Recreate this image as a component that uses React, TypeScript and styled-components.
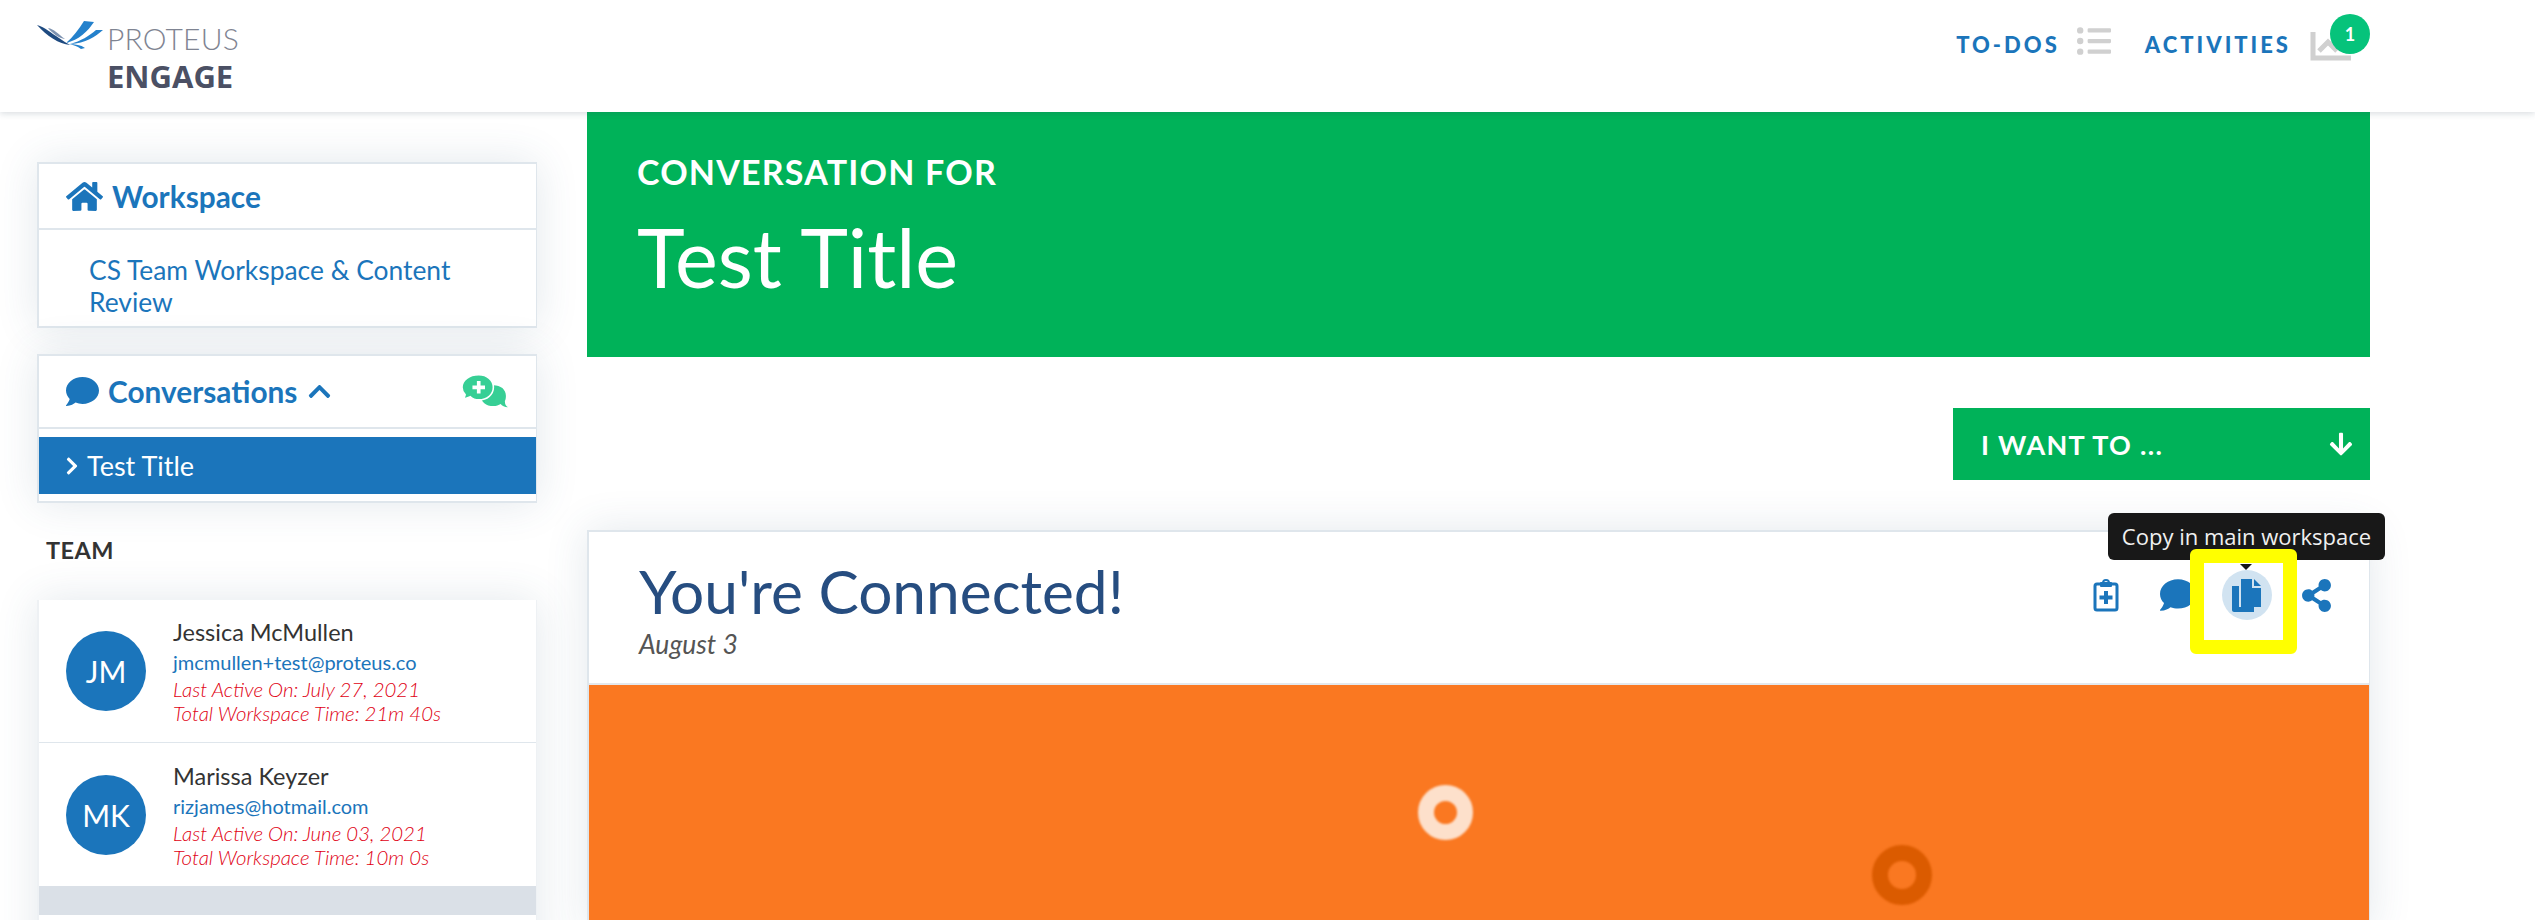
import React from "react";
import styled, { createGlobalStyle } from "styled-components";
import {
  FaArrowDown,
  FaChevronRight,
  FaChevronUp,
  FaComment,
  FaHome,
  FaListUl,
  FaShareAlt,
} from "react-icons/fa";

const blue = "#1b75bb";
const green = "#00b259";

const GlobalStyle = createGlobalStyle`
  html, body {
    margin: 0;
    padding: 0;
    background: #fff;
    font-family: "Lato", "Liberation Sans", sans-serif;
    overflow: hidden;
  }
  * { box-sizing: border-box; }
`;

const Page = styled.div`
  width: 2535px;
  height: 920px;
  overflow: hidden;
`;

const Header = styled.header`
  height: 112px;
  display: flex;
  justify-content: space-between;
  padding: 0 184px 0 37px;
  background: #fff;
  box-shadow: 0 2px 6px rgba(40, 60, 80, 0.16);
  position: relative;
  z-index: 2;
`;

const Logo = styled.div`
  display: grid;
  grid-template-columns: 70px auto;
  grid-template-rows: 36px 30px;
  padding-top: 21px;
`;

const LogoMark = styled.svg`
  width: 66px;
  height: 28px;
`;

const LogoName = styled.div`
  font-size: 30px;
  font-weight: 300;
  line-height: 34px;
  color: #7f8492;
  letter-spacing: 0.2px;
`;

const LogoProduct = styled.div`
  grid-column: 2;
  font-family: "Open Sans", sans-serif;
  font-size: 31px;
  font-weight: 700;
  line-height: 38px;
  color: #4b5064;
`;

const TopNav = styled.nav`
  display: flex;
  align-items: flex-start;
  padding-top: 29px;
`;

const NavLink = styled.div`
  display: flex;
  align-items: center;
  height: 30px;
  gap: 19px;
  color: ${blue};
  font-size: 22px;
  font-weight: 900;
  letter-spacing: 3px;
  margin-left: 34px;
`;

const ListIcon = styled(FaListUl)`
  color: #d0d0d0;
  flex: none;
  margin-left: -2px;
  margin-bottom: 7px;
`;

const ChartWrap = styled.div`
  position: relative;
  width: 41px;
  height: 30px;
  margin-top: 5px;
`;

const Badge = styled.div`
  position: absolute;
  left: 20px;
  top: -18px;
  width: 40px;
  height: 40px;
  border-radius: 50%;
  background: #06c37b;
  color: #fff;
  font-size: 18px;
  font-weight: 700;
  display: flex;
  align-items: center;
  justify-content: center;
  letter-spacing: 0;
`;

const Body = styled.div`
  display: flex;
`;

const Sidebar = styled.aside`
  width: 500px;
  margin-left: 37px;
  margin-right: 50px;
  padding-top: 50px;
  flex: none;
`;

const SideCard = styled.section`
  background: #fff;
  border: 2px solid #dfe6ec;
  border-right-width: 1px;
  box-shadow: 0 0 40px rgba(60, 90, 120, 0.14);
  margin-bottom: 26px;
`;

const SideHead = styled.div<{ $height: number }>`
  height: ${(p) => p.$height}px;
  display: flex;
  align-items: center;
  gap: 9px;
  padding: 0 28px 0 27px;
  border-bottom: 2px solid #dfe6ec;
  color: ${blue};
  font-size: 29.8px;
  font-weight: 700;
`;

const UpChevron = styled(FaChevronUp)`
  margin-left: 1px;
`;

const HeadPush = styled.div`
  margin-left: auto;
  display: flex;
`;

const WorkspaceLink = styled.div`
  padding: 24px 40px 8px 50px;
  color: ${blue};
  font-size: 26.4px;
  line-height: 32px;
`;

const ActiveRow = styled.div`
  height: 57px;
  margin: 8px 0 7px;
  padding-left: 23px;
  display: flex;
  align-items: center;
  gap: 5px;
  background: ${blue};
  color: #fff;
  font-size: 27px;
`;

const TeamLabel = styled.div`
  margin-left: 9px;
  padding-top: 8px;
  height: 71px;
  color: #333;
  font-size: 23.5px;
  line-height: 26px;
  font-weight: 700;
  letter-spacing: 0.4px;
`;

const TeamCard = styled.section`
  background: #fff;
  border-left: 2px solid #eef1f4;
  border-right: 1px solid #eef1f4;
  box-shadow: 0 0 40px rgba(60, 90, 120, 0.14);
  height: 400px;
`;

const Member = styled.div<{ $divider?: boolean }>`
  height: 143px;
  display: flex;
  align-items: center;
  padding-left: 27px;
  gap: 27px;
  border-bottom: ${(p) => (p.$divider ? "1px solid #dfe6ec" : "none")};
`;

const Avatar = styled.div`
  width: 80px;
  height: 80px;
  border-radius: 50%;
  background: ${blue};
  color: #fff;
  font-size: 30px;
  display: flex;
  align-items: center;
  justify-content: center;
  flex: none;
`;

const MemberInfo = styled.div`
  display: flex;
  flex-direction: column;
`;

const MemberName = styled.div`
  color: #333;
  font-size: 23.5px;
  line-height: 30px;
`;

const MemberEmail = styled.div`
  color: ${blue};
  font-size: 20px;
  line-height: 30px;
`;

const MemberStat = styled.div`
  color: #e00012;
  font-size: 20.4px;
  font-style: italic;
  font-weight: 300;
  line-height: 24px;
`;

const Band = styled.div`
  height: 29px;
  background: #dae0e7;
`;

const Main = styled.main`
  width: 1783px;
  flex: none;
`;

const Banner = styled.div`
  height: 245px;
  background: ${green};
  color: #fff;
  padding: 40px 50px;
`;

const BannerKicker = styled.div`
  font-size: 34px;
  font-weight: 700;
  line-height: 40px;
  letter-spacing: 1.2px;
`;

const BannerTitle = styled.h1`
  margin: 17px 0 0;
  font-size: 81px;
  font-weight: 400;
  line-height: 96px;
`;

const ActionRow = styled.div`
  display: flex;
  justify-content: flex-end;
  padding: 51px 0 50px;
`;

const ActionButton = styled.div`
  width: 417px;
  height: 72px;
  background: ${green};
  color: #fff;
  display: flex;
  align-items: center;
  justify-content: space-between;
  padding: 0 16px 0 28px;
  font-size: 27px;
  font-weight: 700;
  letter-spacing: 1.3px;
`;

const PostCard = styled.article`
  height: 400px;
  background: #fff;
  border: 2px solid #dfe6ec;
  border-right-width: 1px;
  box-shadow: 0 0 40px rgba(60, 90, 120, 0.14);
`;

const PostHead = styled.div`
  height: 153px;
  display: flex;
  justify-content: space-between;
  padding: 23px 16px 0 50px;
  border-bottom: 2px solid #e4e8ec;
`;

const PostTitle = styled.h2`
  margin: 0;
  color: #264d80;
  font-size: 60.4px;
  font-weight: 400;
  line-height: 72px;
`;

const PostDate = styled.div`
  margin-top: 5px;
  color: #555;
  font-size: 26.5px;
  font-style: italic;
  line-height: 24px;
`;

const PostTools = styled.div`
  display: flex;
  align-items: flex-start;
  padding-top: 15px;
  color: ${blue};
`;

const Tool = styled.div<{ $width: number }>`
  width: ${(p) => p.$width}px;
  height: 50px;
  display: flex;
  align-items: center;
  justify-content: center;
  position: relative;
  svg { flex: none; }
`;

const ToolHalo = styled.div`
  width: 50px;
  height: 50px;
  border-radius: 50%;
  background: #d1e3f1;
  display: flex;
  align-items: center;
  justify-content: center;
`;

const Highlight = styled.div`
  position: absolute;
  left: -24px;
  top: -21px;
  width: 107px;
  height: 105px;
  border: 14px solid #ffff00;
  border-radius: 6px;
`;

const Tooltip = styled.div`
  position: absolute;
  left: -106px;
  top: -57px;
  width: 277px;
  height: 47px;
  background: #181818;
  border-radius: 6px;
  color: #f0f0f0;
  font-family: "Open Sans", sans-serif;
  font-size: 22px;
  line-height: 47px;
  text-align: center;
  white-space: nowrap;
`;

const TooltipTip = styled.div`
  position: absolute;
  left: 26px;
  top: -6px;
  width: 0;
  height: 0;
  border-left: 6px solid transparent;
  border-right: 6px solid transparent;
  border-top: 6px solid #181818;
`;

const Slide = styled.div`
  height: 250px;
  background: #fa7821;
  position: relative;
`;

const Ring = styled.div<{ $x: number; $y: number; $size: number; $color: string }>`
  position: absolute;
  left: ${(p) => p.$x}px;
  top: ${(p) => p.$y}px;
  width: ${(p) => p.$size}px;
  height: ${(p) => p.$size}px;
  border-radius: 50%;
  border: 16px solid ${(p) => p.$color};
  filter: blur(1px);
`;

function ProteusMark() {
  return (
    <LogoMark viewBox="0 0 66 28">
      <path d="M0 4 C8 6 14 12 22 17 C26 20 30 22 33 24 C22 23 10 15 0 4Z" fill="#1e4a80" />
      <path d="M11 7 C17 8 21 13 28 18 C22 17 16 13 11 7Z" fill="#7d92b0" />
      <path d="M47 0 L57 1 C51 10 42 19 29 22 C36 16 42 8 47 0Z" fill="#2481cc" />
      <path d="M66 9 C58 16 49 22 33 23 C44 20 52 15 59 9Z" fill="#2481cc" />
      <path d="M32 23 C38 23 44 24 48 27 L44 28 C40 25 36 24 32 23Z" fill="#2481cc" />
    </LogoMark>
  );
}

function ChartIcon() {
  return (
    <svg width="41" height="30" viewBox="0 0 41 30">
      <path d="M3 0 V26 H41" fill="none" stroke="#d0d0d0" strokeWidth="5" strokeLinecap="round" />
      <path d="M9 19 L18 10 L27 19" fill="none" stroke="#d0d0d0" strokeWidth="5" />
    </svg>
  );
}

function ClipboardPlus() {
  return (
    <svg width="26" height="33" viewBox="0 0 26 33">
      <rect x="2" y="5" width="22" height="26" rx="2" fill="none" stroke={blue} strokeWidth="3" />
      <circle cx="13" cy="4" r="3" fill="none" stroke={blue} strokeWidth="2" />
      <rect x="7" y="3" width="12" height="5" rx="1" fill={blue} />
      <path d="M13 12 V25 M6.500 18.500 H19.500" stroke={blue} strokeWidth="4" />
    </svg>
  );
}

function CopyIcon() {
  return (
    <svg width="29" height="33" viewBox="0 0 29 33">
      <path d="M0 7 H7 V28 H22 V33 H2 C1 33 0 32 0 31Z" fill={blue} />
      <path d="M9 0 H20 V9 H29 V28 H9Z" fill={blue} />
      <path d="M22 0 L29 7 H22Z" fill={blue} />
    </svg>
  );
}

function NewConversation() {
  return (
    <svg width="46" height="36" viewBox="0 0 44 33">
      <path d="M42 20 C42 14 37 10 30 10 C23 10 18 14 18 20 C18 26 23 30 30 30 C33 30 35 29 37 28 C38 30 41 31 44 31 C42 30 41 28 41 25 C41.700 24 42 22 42 20Z" fill="#37cf95" />
      <path d="M30 12 C30 5 24 0 16 0 C7 0 0 5 0 12 C0 15 1 17 3 19 C3 20 2 22 0 23 C3 23 6 22 8 21 C10 23 13 24 16 24 C24 24 30 19 30 12Z" fill="#37cf95" stroke="#fff" strokeWidth="1.500" />
      <path d="M16 6 V18 M10 12 H22" stroke="#fff" strokeWidth="3.500" />
    </svg>
  );
}

export default function App() {
  return (
    <Page>
      <GlobalStyle />
      <Header>
        <Logo>
          <ProteusMark />
          <LogoName>PROTEUS</LogoName>
          <LogoProduct>ENGAGE</LogoProduct>
        </Logo>
        <TopNav>
          <NavLink>
            TO-DOS
            <ListIcon size={34} />
          </NavLink>
          <NavLink>
            ACTIVITIES
            <ChartWrap>
              <ChartIcon />
              <Badge>1</Badge>
            </ChartWrap>
          </NavLink>
        </TopNav>
      </Header>
      <Body>
        <Sidebar>
          <SideCard>
            <SideHead $height={66}>
              <FaHome size={37} />
              Workspace
            </SideHead>
            <WorkspaceLink>CS Team Workspace &amp; Content Review</WorkspaceLink>
          </SideCard>
          <SideCard>
            <SideHead $height={73}>
              <FaComment size={33} />
              Conversations
              <UpChevron size={25} />
              <HeadPush>
                <NewConversation />
              </HeadPush>
            </SideHead>
            <ActiveRow>
              <FaChevronRight size={20} />
              Test Title
            </ActiveRow>
          </SideCard>
          <TeamLabel>TEAM</TeamLabel>
          <TeamCard>
            <Member $divider>
              <Avatar>JM</Avatar>
              <MemberInfo>
                <MemberName>Jessica McMullen</MemberName>
                <MemberEmail>jmcmullen+test@proteus.co</MemberEmail>
                <MemberStat>Last Active On: July 27, 2021</MemberStat>
                <MemberStat>Total Workspace Time: 21m 40s</MemberStat>
              </MemberInfo>
            </Member>
            <Member>
              <Avatar>MK</Avatar>
              <MemberInfo>
                <MemberName>Marissa Keyzer</MemberName>
                <MemberEmail>rizjames@hotmail.com</MemberEmail>
                <MemberStat>Last Active On: June 03, 2021</MemberStat>
                <MemberStat>Total Workspace Time: 10m 0s</MemberStat>
              </MemberInfo>
            </Member>
            <Band />
          </TeamCard>
        </Sidebar>
        <Main>
          <Banner>
            <BannerKicker>CONVERSATION FOR</BannerKicker>
            <BannerTitle>Test Title</BannerTitle>
          </Banner>
          <ActionRow>
            <ActionButton>
              I WANT TO ...
              <FaArrowDown size={26} />
            </ActionButton>
          </ActionRow>
          <PostCard>
            <PostHead>
              <div>
                <PostTitle>You're Connected!</PostTitle>
                <PostDate>August 3</PostDate>
              </div>
              <PostTools>
                <Tool $width={70}>
                  <ClipboardPlus />
                </Tool>
                <Tool $width={73}>
                  <FaComment size={36} />
                </Tool>
                <Tool $width={65}>
                  <ToolHalo>
                    <CopyIcon />
                  </ToolHalo>
                  <Tooltip>Copy in main workspace</Tooltip>
                  <Highlight />
                  <TooltipTip />
                </Tool>
                <Tool $width={74}>
                  <FaShareAlt size={33} />
                </Tool>
              </PostTools>
            </PostHead>
            <Slide>
              <Ring $x={829} $y={100} $size={55} $color="#fde0cb" />
              <Ring $x={1283} $y={160} $size={60} $color="#db5b00" />
            </Slide>
          </PostCard>
        </Main>
      </Body>
    </Page>
  );
}
